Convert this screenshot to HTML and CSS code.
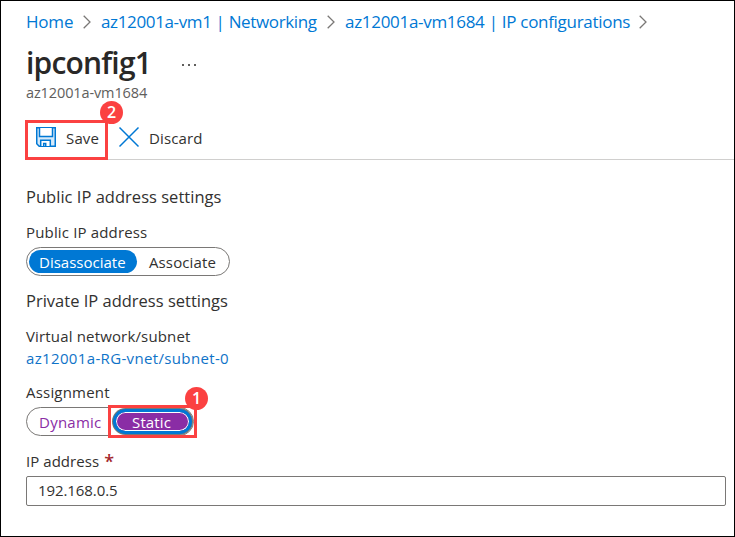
FILE: index.html
```html
<!DOCTYPE html>
<html lang="en">
<head>
<meta charset="utf-8">
<title>ipconfig1</title>
<link rel="stylesheet" href="styles.css">
</head>
<body>
<main class="blade">
  <nav class="crumbs">
    <a class="c1">Home</a>
    <svg class="chev" viewBox="0 0 8 14"><path d="M.7 .7 7 7 .7 13.300"/></svg>
    <a class="c2">az12001a-vm1 | Networking</a>
    <svg class="chev" viewBox="0 0 8 14"><path d="M.7 .7 7 7 .7 13.300"/></svg>
    <a class="c3">az12001a-vm1684 | IP configurations</a>
    <svg class="chev" viewBox="0 0 8 14"><path d="M.7 .7 7 7 .7 13.300"/></svg>
  </nav>
  <header class="heading">
    <h1>ipconfig1</h1>
    <svg class="more" viewBox="0 0 14 2"><path d="M0 0h2v2H0zM6 0h2v2H6zM12 0h2v2h-2z"/></svg>
  </header>
  <p class="subtitle"><span>az12001a-vm1684</span></p>
  <div class="toolbar">
    <button class="save">
      <svg class="disk" viewBox="0 0 20 20"><path class="shell" d="M.75 .75h18.500v18.500H3.200L.75 16.800z"/><path class="pane" d="M3.500 1v8.500h13V1M4.700 19v-5.800h9.600V19"/><path d="M7.700 19v-2.500h2V19"/></svg>
      <span>Save</span>
      <b class="badge">2</b>
    </button>
    <button class="discard">
      <svg class="cross" viewBox="0 0 20 20"><path d="M.5 .5l19 19M19.500 .5l-19 19"/></svg>
      <span>Discard</span>
    </button>
  </div>
  <h2 class="public"><span>Public IP address settings</span></h2>
  <p class="label l1"><span>Public IP address</span></p>
  <div class="toggle t1"><span class="on">Disassociate</span><span class="off">Associate</span></div>
  <h2 class="private"><span>Private IP address settings</span></h2>
  <p class="label l2"><span>Virtual network/subnet</span></p>
  <p class="label link"><a>az12001a-RG-vnet/subnet-0</a></p>
  <p class="label l3"><span>Assignment</span></p>
  <div class="toggle t2"><span class="dyn">Dynamic</span><span class="static">Static</span>
    <div class="callout"><b class="badge">1</b></div>
  </div>
  <p class="label l4"><span>IP address</span><i class="req">*</i></p>
  <div class="field"><span>192.168.0.5</span></div>
</main>
</body>
</html>
```
FILE: styles.css
```css
* { box-sizing: border-box; }
body { margin: 0; background: #fff; color: #323130; font-family: "Open Sans", "Noto Sans", sans-serif; font-size: 15px; }
h1, h2, p { margin: 0; font-weight: 400; }
svg { display: block; flex: none; fill: none; overflow: visible; }
span, a { white-space: nowrap; }
.blade { width: 735px; height: 537px; border: 1px solid #000; padding: 8px 8px 0 25px; overflow: hidden; }
.crumbs { display: flex; align-items: center; height: 24px; font-size: 17px; color: #0078d4; }
.crumbs a { flex: none; }
.c1 { width: 57px; letter-spacing: -.2px; }
.c2 { width: 226px; margin-left: 10px; letter-spacing: -.36px; }
.c3 { width: 294px; margin-left: 10px; letter-spacing: -.3px; }
.chev { width: 8px; height: 14px; margin-top: 2px; stroke: #7a7876; stroke-width: 1.3; }
.heading { display: flex; height: 48px; }
h1 { width: 156px; font-size: 30px; font-weight: 600; line-height: 60px; letter-spacing: -.8px; color: #292827; white-space: nowrap; }
.more { width: 14px; height: 2px; margin-top: 31px; fill: #605e5c; }
.subtitle { height: 24px; line-height: 24px; font-size: 14.500px; letter-spacing: -.12px; color: #605e5c; }
.toolbar { display: flex; height: 55px; margin: 0 -8px 0 -1px; padding-top: 15px; border-bottom: 1px solid #d0cfce; }
button { position: relative; display: flex; align-items: center; border: 0; padding: 0; background: none; font: inherit; color: inherit; letter-spacing: .15px; }
.save { width: 83px; height: 40px; border: 3px solid #fb4141; padding: 0 0 5px 8px; gap: 10px; }
.discard { height: 35px; margin-left: 11px; gap: 10px; }
.disk, .cross { width: 20px; height: 20px; stroke: #0078d4; stroke-width: 1.500; }
.shell { fill: #d6eafa; }
.pane { fill: #fff; }
.save .disk, .discard .cross { margin-top: -1px; }
.badge { position: absolute; width: 23px; height: 23px; border-radius: 50%; background: #fb4141; color: #fff; font: 600 16px/23px "Open Sans", sans-serif; letter-spacing: 0; text-align: center; }
.save .badge { left: 72px; top: -22px; }
h2 { font-size: 16.500px; height: 24px; line-height: 24px; }
.public { margin-top: 25px; letter-spacing: .02px; }
.private { margin-top: 13px; }
.label { height: 22px; line-height: 22px; letter-spacing: .16px; }
.l1 { margin-top: 12px; }
.l2 { margin-top: 12px; }
.link { color: #0f73c8; letter-spacing: .35px; }
.l3 { margin-top: 12px; letter-spacing: .2px; }
.l4 { margin-top: 14px; display: flex; letter-spacing: .05px; }
.toggle { position: relative; display: flex; align-items: center; height: 29px; border: 1px solid #7a7876; border-radius: 15px; }
.t1 { width: 204px; margin-top: 4px; padding-left: 2px; }
.on { width: 108px; height: 23px; line-height: 24px; border-radius: 12px; background: #0078d4; color: #fff; padding-left: 10px; }
.off { padding: 1px 0 0 12px; letter-spacing: .12px; }
.t2 { width: 168px; margin-top: 4px; color: #8a2da5; }
.dyn { width: 86px; padding: 1px 0 0 12px; letter-spacing: .25px; }
.static { width: 79px; height: 25px; line-height: 20px; border: 3px solid #0078d4; border-radius: 13px; background: #8a2da5; box-shadow: inset 0 0 0 1px #fff, 0 0 0 1px #777; color: #fff; padding-left: 16px; letter-spacing: .15px; }
.callout { position: absolute; left: 81px; top: -3px; width: 89px; height: 33px; border: 3px solid #fb4141; }
.callout .badge { left: 74px; top: -21px; }
.req { margin-left: 5px; color: #a4262c; font: 600 18px/22px "Open Sans", sans-serif; letter-spacing: 0; }
.field { display: flex; align-items: center; width: 700px; height: 30px; margin-top: 4px; border: 1px solid #7a7876; border-radius: 2px; padding: 0 0 2px 11px; letter-spacing: -.08px; }
```
